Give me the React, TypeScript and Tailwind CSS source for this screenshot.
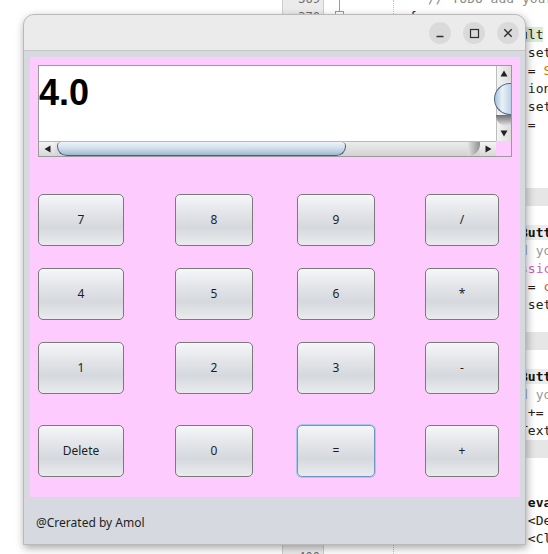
import React from "react";

type Line = { pl: string; content: React.ReactNode; band?: boolean };

const R = "pl-[126px]";

const codeLines: Line[] = [
  { pl: "pl-[34px]", content: <span className="text-[#8c8c8c]">// TODO add your handling code here:</span> },
  { pl: "pl-[15px]", content: <span className="text-[#222]">{"{"}</span> },
  { pl: R, content: <span className="bg-[#dcebd2] text-[#222]">ult</span> },
  { pl: R, content: <span className="text-[#222]">{" set"}</span> },
  { pl: R, content: <span className="text-[#222]">{" = "}<span className="text-[#c77a0a]">S</span></span> },
  { pl: R, content: <span className="text-[#222]">{" ion"}</span> },
  { pl: R, content: <span className="text-[#222]">{" set"}</span> },
  { pl: R, content: <span className="text-[#222]">{" ="}</span> },
  { pl: R, content: "" },
  { pl: R, content: "" },
  { pl: R, content: "" },
  { pl: R, content: "", band: true },
  { pl: R, content: "" },
  { pl: R, content: <span className="font-bold text-[#111] bg-[#ececec]">Butt</span> },
  { pl: R, content: <span className="text-[#9a9a9a]">d yo</span> },
  { pl: R, content: <span className="text-[#c75fc4]">ssic</span> },
  { pl: R, content: <span className="text-[#222]">{" = "}<span className="text-[#c4524d]">c</span></span> },
  { pl: R, content: <span className="text-[#222]">{" set"}</span> },
  { pl: R, content: "" },
  { pl: R, content: "", band: true },
  { pl: R, content: "" },
  { pl: R, content: <span className="font-bold text-[#111] bg-[#ececec]">Butt</span> },
  { pl: R, content: <span className="text-[#9a9a9a]">d yo</span> },
  { pl: R, content: <span className="text-[#222]">{" +="}</span> },
  { pl: R, content: <span className="text-[#222]">Text</span> },
  { pl: R, content: "", band: true },
  { pl: R, content: "" },
  { pl: R, content: "" },
  { pl: R, content: <span className="font-bold text-[#111]">{" eva"}</span> },
  { pl: R, content: <span className="text-[#222]">{" <De"}</span> },
  { pl: R, content: <span className="text-[#222]">{" <Cl"}</span> },
  { pl: R, content: "" },
];

function Editor() {
  return (
    <div className="flex h-full ml-[282px] font-['DejaVu_Sans_Mono',monospace]">
      <div className="w-[42px] h-full shrink-0 bg-[#ebebeb] border-l border-r border-[#cdcdcd] overflow-hidden">
        <div className="flex flex-col -mt-[10px]">
          {codeLines.map((_, i) => (
            <div key={i} className="h-[18px] leading-[18px] text-[12px] text-right pr-[3px] text-[#6b6b6b]">
              {369 + i}
            </div>
          ))}
        </div>
      </div>
      <div className="w-[69px] h-full shrink-0 flex flex-col">
        <div className="ml-[15px] w-px h-[11px] bg-[#9a9a9a]" />
        <div className="ml-[11px] w-[9px] h-[9px] border border-[#9a9a9a] bg-white" />
      </div>
      <div className="w-px h-full shrink-0 border-l border-dotted border-[#c4c4c4]" />
      <div className="flex-1 h-full overflow-hidden">
        <div className="flex flex-col -mt-[10px]">
          {codeLines.map((l, i) => (
            <div
              key={i}
              className={
                l.band
                  ? "h-[18px] leading-[18px] text-[13px] whitespace-pre bg-[#e6e6e6] " + l.pl
                  : "h-[18px] leading-[18px] text-[13px] whitespace-pre " + l.pl
              }
            >
              {l.content}
            </div>
          ))}
        </div>
      </div>
    </div>
  );
}

function TitleButtons() {
  return (
    <div className="flex items-center gap-[12px]">
      <div className="w-[22px] h-[22px] rounded-full bg-[#dadada] flex items-center justify-center">
        <svg width="22" height="22" viewBox="0 0 22 22">
          <line x1="7.5" y1="14.5" x2="14.5" y2="14.5" stroke="#2f2f2f" strokeWidth="1.3" />
        </svg>
      </div>
      <div className="w-[22px] h-[22px] rounded-full bg-[#dadada] flex items-center justify-center">
        <svg width="22" height="22" viewBox="0 0 22 22">
          <rect x="7.5" y="7.5" width="8" height="8" fill="none" stroke="#2f2f2f" strokeWidth="1.2" />
        </svg>
      </div>
      <div className="w-[22px] h-[22px] rounded-full bg-[#dadada] flex items-center justify-center">
        <svg width="22" height="22" viewBox="0 0 22 22">
          <path d="M7.3 7.3 L14.7 14.7 M14.7 7.3 L7.3 14.7" stroke="#2f2f2f" strokeWidth="1.4" />
        </svg>
      </div>
    </div>
  );
}

function VScroll() {
  return (
    <div className="w-[15px] h-full shrink-0 flex flex-col bg-[linear-gradient(to_right,#f2f2f2,#e2e2e2)] border-l border-[#bdbdbd]">
      <div className="h-[15px] shrink-0 flex items-center justify-center bg-[linear-gradient(to_right,#f4f4f4,#dcdcdc)]">
        <svg width="8" height="7" viewBox="0 0 8 7">
          <path d="M4 0.5 L7.5 6.5 L0.5 6.5 Z" fill="#222" />
        </svg>
      </div>
      <div className="flex-1 flex flex-col pt-[2px]">
        <div className="-ml-[3px] h-[32px] rounded-l-[16px] border border-r-0 border-[#4e6b87] bg-[linear-gradient(to_right,#a9c2da,#e9f1f8_45%,#bdd2e6)]" />
        <div className="h-[11px] -ml-[1px] rounded-bl-[10px] bg-[linear-gradient(to_bottom,#6e6e6e,#a9a9a9_50%,#e6e6e6)]" />
      </div>
      <div className="h-[15px] shrink-0 flex items-center justify-center bg-[linear-gradient(to_right,#f4f4f4,#dcdcdc)]">
        <svg width="8" height="7" viewBox="0 0 8 7">
          <path d="M4 6.5 L7.5 0.5 L0.5 0.5 Z" fill="#222" />
        </svg>
      </div>
    </div>
  );
}

function HScroll() {
  return (
    <div className="flex-1 h-full flex bg-[linear-gradient(to_bottom,#ececec,#d2d2d2)] border-t border-[#b8b8b8]">
      <div className="w-[16px] shrink-0 flex items-center justify-center bg-[linear-gradient(to_bottom,#f4f4f4,#d8d8d8)]">
        <svg width="7" height="8" viewBox="0 0 7 8">
          <path d="M0.5 4 L6.5 0.5 L6.5 7.5 Z" fill="#222" />
        </svg>
      </div>
      <div className="w-[2px] shrink-0" />
      <div className="w-[289px] shrink-0 rounded-bl-[14px] rounded-br-[14px] rounded-tl-[6px] rounded-tr-[6px] border border-t-0 border-[#48637e] bg-[linear-gradient(to_bottom,#eef3f8,#d3e0ec_45%,#b3c8dc_80%,#9fb6cc)]" />
      <div className="flex-1 flex justify-end">
        <div className="w-[12px] rounded-br-[12px] bg-[linear-gradient(to_right,#e0e0e0,#8f8f8f)]" />
      </div>
      <div className="w-[16px] shrink-0 flex items-center justify-center bg-[linear-gradient(to_bottom,#f4f4f4,#d8d8d8)]">
        <svg width="7" height="8" viewBox="0 0 7 8">
          <path d="M6.5 4 L0.5 0.5 L0.5 7.5 Z" fill="#222" />
        </svg>
      </div>
    </div>
  );
}

function Btn({ label, focused, cls }: { label: string; focused?: boolean; cls: string }) {
  return (
    <button
      className={
        (focused
          ? "border-[#6f94c6] shadow-[0_0_0_1px_#aac6ec] "
          : "border-[#7a7a7a] ") +
        "h-[52px] rounded-[5px] border bg-[linear-gradient(to_bottom,#f5f6f8,#e3e5e9_35%,#d5d8dd_65%,#e9ebee)] text-[12px] text-[#1e1e1e] font-['Noto_Sans',sans-serif] flex items-center justify-center " +
        cls
      }
    >
      {label}
    </button>
  );
}

const rows: string[][] = [
  ["7", "8", "9", "/"],
  ["4", "5", "6", "*"],
  ["1", "2", "3", "-"],
  ["Delete", "0", "=", "+"],
];

function Window() {
  return (
    <div className="absolute left-[23px] top-[14px] w-[503px] h-[531px] flex flex-col rounded-t-[11px] border border-[#b9b9b9] bg-[#d6d9df] shadow-[1px_3px_8px_rgba(0,0,0,0.35)] overflow-hidden">
      <div className="h-[36px] shrink-0 bg-[#ebebeb] border-b border-[#c6c6c6] flex items-center justify-end pr-[6px] pt-[1px]">
        <TitleButtons />
      </div>
      <div className="flex-1 flex flex-col pt-[6px] pl-[6px] pr-[5px]">
        <div className="w-[490px] h-[440px] shrink-0 bg-[#fecbfe] p-[8px] flex flex-col">
          <div className="w-[474px] h-[92px] shrink-0 border border-[#9a9a9a] flex flex-col">
            <div className="flex flex-1 min-h-0">
              <div className="flex-1 bg-white pt-[9px]">
                <div className="text-[36px] leading-[36px] font-bold text-black font-['Liberation_Sans',Arial,sans-serif]">
                  4.0
                </div>
              </div>
              <VScroll />
            </div>
            <div className="h-[15px] shrink-0 flex">
              <HScroll />
              <div className="w-[15px] shrink-0 bg-[#fecbfe]" />
            </div>
          </div>
          <div className="flex flex-col gap-[22px] mt-[37px]">
            {rows.map((r, ri) => (
              <div
                key={ri}
                className={
                  ri === 3
                    ? "grid grid-cols-[86px_129px_122px_124px] mt-[9px]"
                    : "grid grid-cols-[86px_129px_122px_124px]"
                }
              >
                <Btn label={r[0]} cls="w-[86px]" />
                <Btn label={r[1]} cls="w-[78px] justify-self-end" />
                <Btn label={r[2]} cls="w-[78px] justify-self-end" focused={r[2] === "="} />
                <Btn label={r[3]} cls="w-[74px] justify-self-end" />
              </div>
            ))}
          </div>
        </div>
        <div className="flex-1 flex items-center pt-[4px] pl-[6px] text-[12px] text-[#1e1e1e] font-['Noto_Sans',sans-serif]">
          @Crerated by Amol
        </div>
      </div>
    </div>
  );
}

export default function App() {
  return (
    <div className="relative w-[548px] h-[554px] overflow-hidden bg-white">
      <Editor />
      <Window />
    </div>
  );
}
